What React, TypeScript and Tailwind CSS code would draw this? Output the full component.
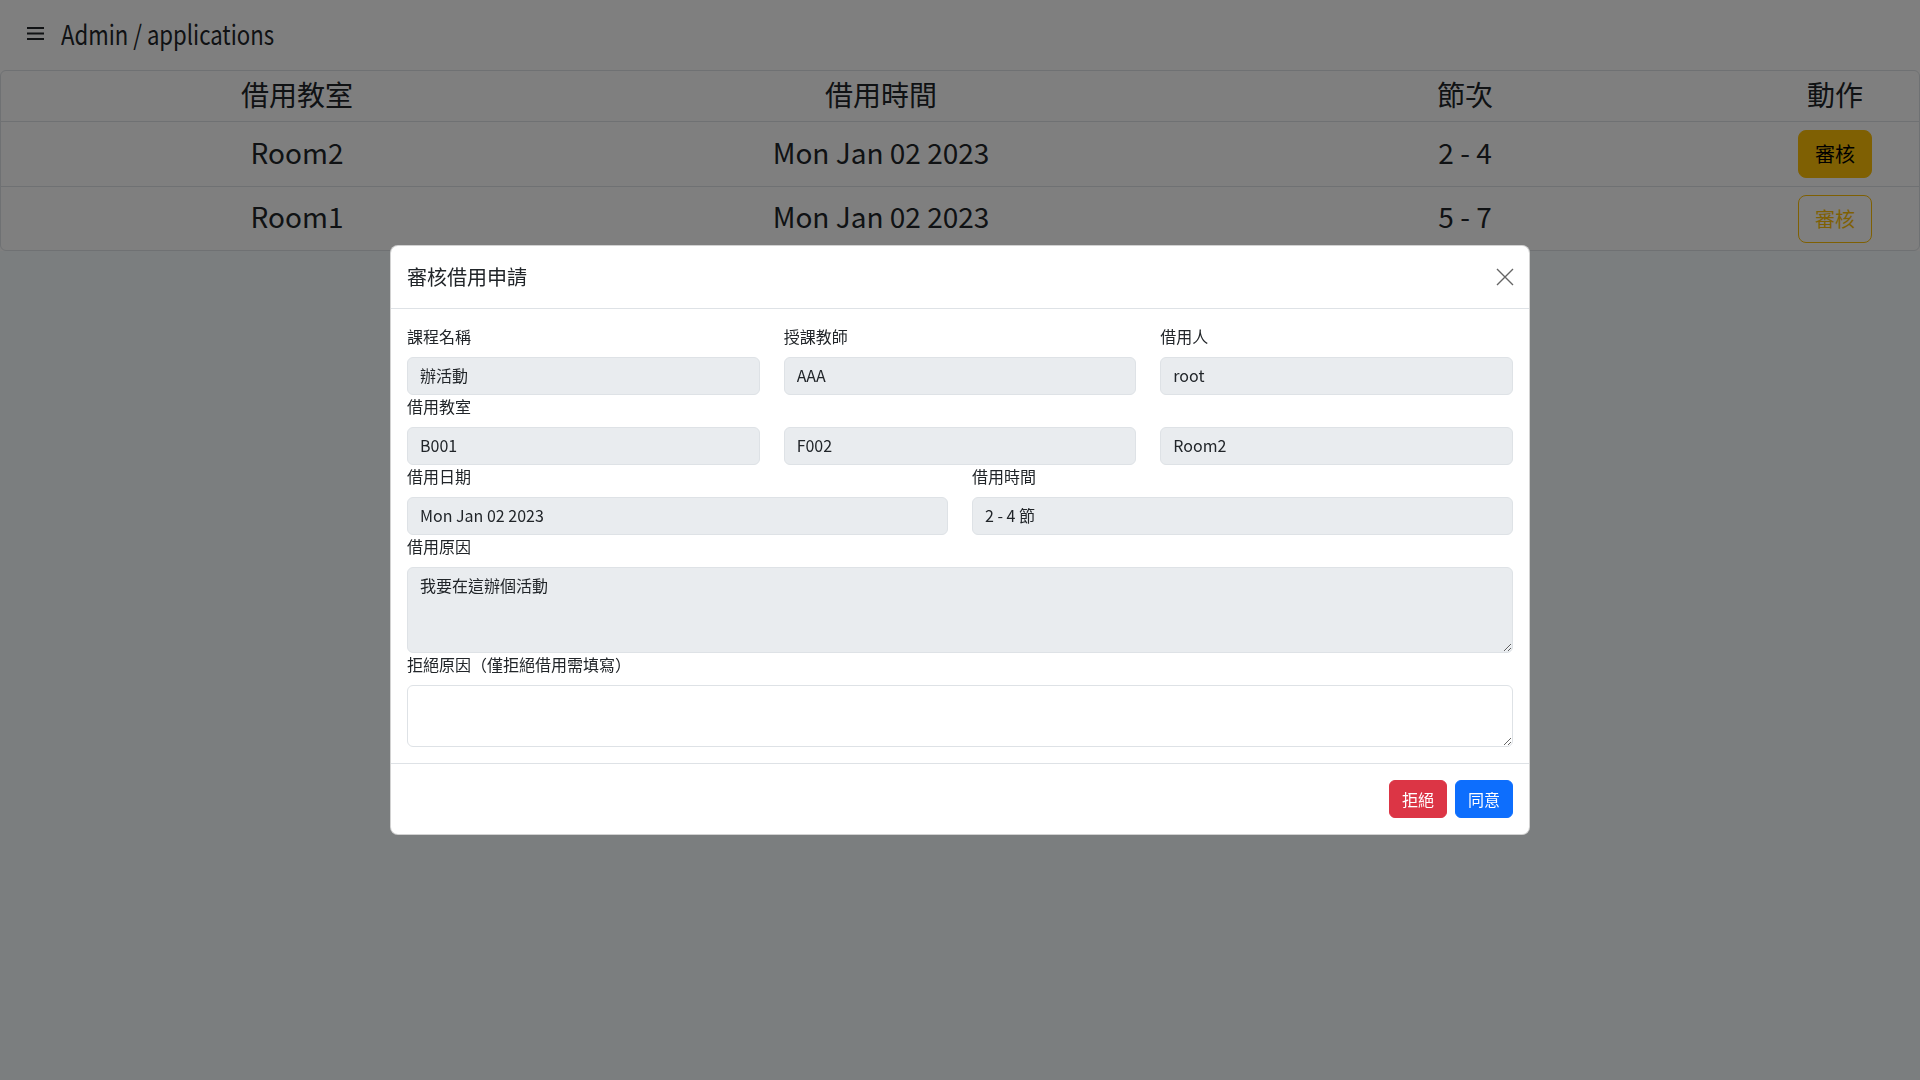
const rows = [
  { room: "Room2", date: "Mon Jan 02 2023", period: "2 - 4", solid: true },
  { room: "Room1", date: "Mon Jan 02 2023", period: "5 - 7", solid: false },
];

const Field = ({ value }: { value: string }) => (
  <input
    readOnly
    value={value}
    className="w-full h-[38px] px-3 pt-[5px] pb-[7px] border border-[#dee2e6] rounded-[6px] bg-[#e9ecef] text-[16px] leading-6 text-[#212529] outline-none"
  />
);

const Label = ({ children }: { children: React.ReactNode }) => (
  <label className="block mb-2 text-[16px] leading-6 text-[#212529] -translate-y-px">{children}</label>
);

export default function App() {
  return (
    <div className="min-h-screen w-full bg-[#f6fdff] font-['Noto_Sans_CJK_TC','Noto_Sans',sans-serif] text-[#212529]">
      <div className="bg-white">
        <div className="h-[70px] flex items-center pl-[27px] gap-[17px]">
          <svg width="17" height="13" viewBox="0 0 17 13" fill="#212529" className="-mt-[4px]">
            <rect x="0" y="0" width="17" height="2" />
            <rect x="0" y="5.5" width="17" height="2" />
            <rect x="0" y="11" width="17" height="2" />
          </svg>
          <span className="inline-block origin-left scale-x-[0.82] text-[27px] leading-[36px] -mt-[3px] whitespace-nowrap">
            Admin / applications
          </span>
        </div>

        <div className="border border-[#dee2e6] rounded-[6px] text-[28px]">
          <div className="grid grid-cols-[592px_576px_592px_1fr] h-[51px] items-center text-center border-b border-[#dee2e6] pb-[4px]">
            <div>借用教室</div>
            <div>借用時間</div>
            <div>節次</div>
            <div className="pr-[10px]">動作</div>
          </div>
          {rows.map((r, i) => (
            <div
              key={r.room}
              className={`grid grid-cols-[592px_576px_592px_1fr] items-center text-center ${
                i < rows.length - 1 ? "h-[65px] border-b border-[#dee2e6]" : "h-[63px]"
              }`}
            >
              <div className="pb-[5px]">{r.room}</div>
              <div className="pb-[5px]">{r.date}</div>
              <div className="pb-[5px]">{r.period}</div>
              <div className="flex justify-center pr-[10px]">
                {r.solid ? (
                  <button className="w-[74px] h-[48px] rounded-[8px] bg-[#ffc107] border border-[#ffc107] text-black text-[20px] leading-[30px]">
                    審核
                  </button>
                ) : (
                  <button className="w-[74px] h-[48px] rounded-[8px] bg-transparent border border-[#ffc107] text-[#ffc107] text-[20px] leading-[30px]">
                    審核
                  </button>
                )}
              </div>
            </div>
          ))}
        </div>
      </div>

      {/* backdrop */}
      <div className="fixed inset-0 bg-black/50" />

      {/* modal */}
      <div className="fixed inset-0 flex items-center justify-center">
        <div className="w-[1140px] bg-white rounded-[8px] border border-black/[0.175]">
          <div className="flex items-center justify-between px-4 py-4 border-b border-[#dee2e6]">
            <h5 className="text-[20px] leading-[30px] font-normal">審核借用申請</h5>
            <button className="w-6 h-6 -mr-1 flex items-center justify-center opacity-60">
              <svg width="18" height="18" viewBox="0 0 18 18" fill="none" stroke="#000" strokeWidth="1.4">
                <path d="M1 1 L17 17 M17 1 L1 17" />
              </svg>
            </button>
          </div>

          <div className="p-4">
            <div className="grid grid-cols-3 gap-x-6">
              <div>
                <Label>課程名稱</Label>
                <Field value="辦活動" />
              </div>
              <div>
                <Label>授課教師</Label>
                <Field value="AAA" />
              </div>
              <div>
                <Label>借用人</Label>
                <Field value="root" />
              </div>
            </div>

            <Label>借用教室</Label>
            <div className="grid grid-cols-3 gap-x-6">
              <Field value="B001" />
              <Field value="F002" />
              <Field value="Room2" />
            </div>

            <div className="grid grid-cols-2 gap-x-6">
              <div>
                <Label>借用日期</Label>
                <Field value="Mon Jan 02 2023" />
              </div>
              <div>
                <Label>借用時間</Label>
                <Field value="2 - 4 節" />
              </div>
            </div>

            <Label>借用原因</Label>
            <textarea
              readOnly
              value="我要在這辦個活動"
              className="block w-full h-[86px] px-3 pt-[5px] pb-[7px] border border-[#dee2e6] rounded-[6px] bg-[#e9ecef] text-[16px] leading-6 text-[#212529] outline-none"
            />

            <Label>拒絕原因（僅拒絕借用需填寫）</Label>
            <textarea className="block w-full h-[62px] px-3 py-1.5 border border-[#dee2e6] rounded-[6px] bg-white text-[16px] leading-6 text-[#212529] outline-none" />
          </div>

          <div className="flex justify-end gap-2 px-4 py-4 border-t border-[#dee2e6]">
            <button className="h-[38px] px-3 rounded-[6px] border border-[#dc3545] bg-[#dc3545] text-white text-[16px] leading-6">拒絕</button>
            <button className="h-[38px] px-3 rounded-[6px] border border-[#0d6efd] bg-[#0d6efd] text-white text-[16px] leading-6">同意</button>
          </div>
        </div>
      </div>
    </div>
  );
}
